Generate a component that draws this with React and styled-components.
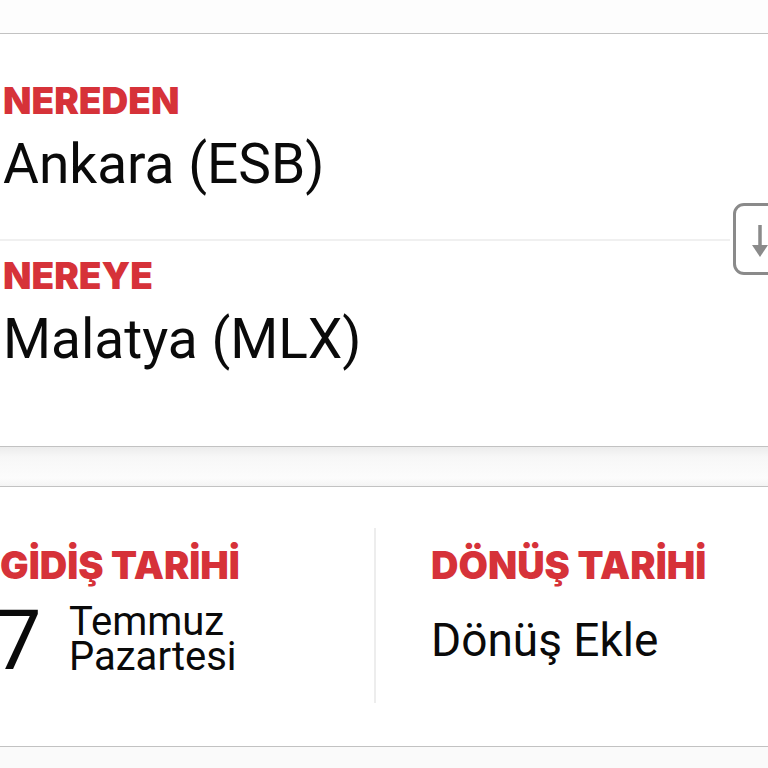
import React from "react";
import styled, { createGlobalStyle } from "styled-components";

const GlobalStyle = createGlobalStyle`
  html, body {
    margin: 0;
    padding: 0;
    background: #fafafa;
  }
  * {
    box-sizing: border-box;
  }
`;

const App = () => {
  return (
    <Page>
      <GlobalStyle />
      <TopStrip />
      <Card>
        <RouteField>
          <Label>NEREDEN</Label>
          <City>Ankara (ESB)</City>
        </RouteField>
        <RouteField $last>
          <Label>NEREYE</Label>
          <City>Malatya (MLX)</City>
        </RouteField>
        <SwapButton aria-label="swap">
          <svg width="70" height="70" viewBox="0 0 70 70">
            <path d="M27 21 V46" stroke="#8a8a8a" strokeWidth="3.5" fill="none" />
            <path d="M19 41 L27 53 L35 41 Z" fill="#8a8a8a" />
            <path d="M43 49 V24" stroke="#8a8a8a" strokeWidth="3.5" fill="none" />
            <path d="M35 29 L43 17 L51 29 Z" fill="#8a8a8a" />
          </svg>
        </SwapButton>
      </Card>
      <Gap />
      <Card>
        <DateRow>
          <DateColumn $divider>
            <Label $big>GİDİŞ TARİHİ</Label>
            <DateValue>
              <Day>17</Day>
              <DayText>
                <span>Temmuz</span>
                <span>Pazartesi</span>
              </DayText>
            </DateValue>
          </DateColumn>
          <DateColumn $inset>
            <Label $big>DÖNÜŞ TARİHİ</Label>
            <AddReturn>Dönüş Ekle</AddReturn>
          </DateColumn>
        </DateRow>
      </Card>
    </Page>
  );
};

export default App;

const Page = styled.div`
  width: 768px;
  height: 768px;
  overflow: hidden;
  background: #fafafa;
  font-family: Roboto, "Liberation Sans", sans-serif;
  color: #0a0a0a;
`;

const TopStrip = styled.div`
  height: 33px;
  background: #fdfdfd;
`;

const Card = styled.div`
  position: relative;
  background: #ffffff;
  border-top: 1.5px solid #c2c2c2;
  border-bottom: 1.5px solid #c2c2c2;
`;

const Gap = styled.div`
  height: 39px;
  background: linear-gradient(#ececec, #f7f7f7 10px, #fcfcfc 80%, #f4f4f4);
`;

const RouteField = styled.div`
  margin-right: 38px;
  padding: ${(p) => (p.$last ? "16px 0 76px 3px" : "48px 0 44px 3px")};
  border-bottom: ${(p) => (p.$last ? "none" : "2px solid #f0f0f0")};
`;

const Label = styled.div`
  font-family: Inter, Roboto, "Liberation Sans", sans-serif;
  font-weight: 900;
  font-size: ${(p) => (p.$big ? "38px" : "37px")};
  line-height: 1;
  color: #d63239;
`;

const City = styled.div`
  margin-top: 14px;
  font-size: 55px;
  line-height: 62px;
`;

const SwapButton = styled.div`
  position: absolute;
  top: 169px;
  left: 733px;
  width: 72px;
  height: 72px;
  border: 3px solid #8a8a8a;
  border-radius: 11px;
  background: #fff;
  svg {
    position: absolute;
    top: -2px;
    left: -3px;
  }
`;

const DateRow = styled.div`
  display: grid;
  grid-template-columns: 376px 1fr;
  padding: 41px 0 43px;
`;

const DateColumn = styled.div`
  height: 175px;
  padding: 18px 0 0 ${(p) => (p.$inset ? "55px" : "0")};
  border-right: ${(p) => (p.$divider ? "2px solid #ededed" : "none")};
`;

const DateValue = styled.div`
  display: flex;
  align-items: flex-end;
  margin-top: 15px;
  margin-left: -53px;
`;

const Day = styled.div`
  font-size: 84px;
  line-height: 1;
  width: 122px;
  margin-bottom: -9.5px;
`;

const DayText = styled.div`
  display: flex;
  flex-direction: column;
  font-size: 40px;
  line-height: 35px;
  span {
    display: block;
  }
`;

const AddReturn = styled.div`
  margin-top: 33px;
  font-size: 46px;
  line-height: 1;
`;
